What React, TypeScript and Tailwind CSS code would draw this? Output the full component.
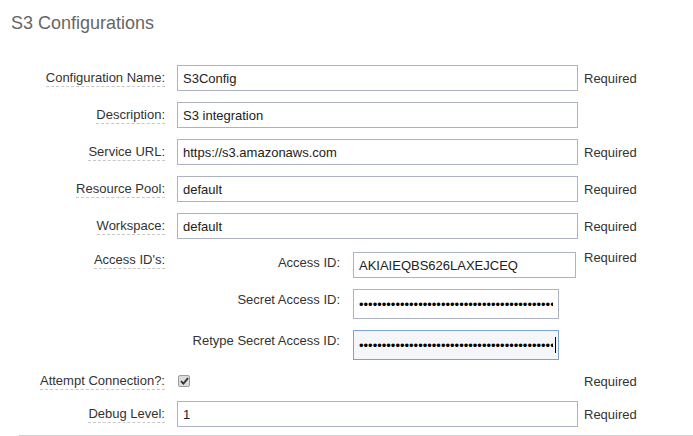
import React from 'react';

const inputCls =
  'h-[26px] border border-[#adb3c5] bg-white px-[5px] text-[13px] text-[#222] outline-none';

function Label({ children }: { children: React.ReactNode }) {
  return (
    <span className="border-b border-dashed border-[#c8c8c8] pb-px leading-[15px] text-[#333]">
      {children}
    </span>
  );
}

function Required() {
  return <span className="leading-[15px] text-[#333]">Required</span>;
}

function Row({
  label,
  value,
  required,
}: {
  label: string;
  value: string;
  required?: boolean;
}) {
  return (
    <div className="flex items-center h-[26px] mb-[11px]">
      <div className="w-[165px] text-right">
        <Label>{label}</Label>
      </div>
      <div className="w-[407px] ml-[12px]">
        <input className={`${inputCls} w-[401px]`} defaultValue={value} />
      </div>
      {required && <Required />}
    </div>
  );
}

const secret = 'x'.repeat(48);

export default function App() {
  return (
    <div
      className="w-[693px] h-[436px] bg-white overflow-hidden text-[13px]"
      style={{ fontFamily: '"Liberation Sans", Arial, sans-serif' }}
    >
      <h1 className="pt-[13px] pl-[11px] text-[18px] leading-[21px] text-[#666] font-normal">
        S3 Configurations
      </h1>

      <div className="mt-[31px]">
        <Row label="Configuration Name:" value="S3Config" required />
        <Row label="Description:" value="S3 integration" />
        <Row label="Service URL:" value="https://s3.amazonaws.com" required />
        <Row label="Resource Pool:" value="default" required />
        <Row label="Workspace:" value="default" required />

        {/* access ids block */}
        <div className="flex items-start">
          <div className="w-[165px] text-right">
            <Label>Access ID's:</Label>
          </div>
          <div className="w-[407px] ml-[12px] pt-[2px] flex flex-col gap-[11px]">
            <div className="flex items-start">
              <div className="w-[163px] text-right pt-[3px] leading-[15px] text-[#333]">Access ID:</div>
              <input
                className={`${inputCls} ml-[13px] w-[223px]`}
                defaultValue="AKIAIEQBS626LAXEJCEQ"
              />
            </div>
            <div className="flex items-start">
              <div className="w-[163px] text-right pt-[3px] leading-[15px] text-[#333]">Secret Access ID:</div>
              <input
                type="password"
                className={`${inputCls} ml-[13px] w-[206px] h-[30px] text-black`}
                defaultValue={secret}
              />
            </div>
            <div className="flex items-start">
              <div className="w-[163px] text-right pt-[3px] leading-[15px] text-[#333]">
                Retype Secret Access ID:
              </div>
              <div className="relative ml-[13px]">
                <input
                  type="password"
                  className="h-[30px] w-[206px] border border-[#78a1de] bg-[#f4f6f9] px-[5px] text-[13px] text-black outline-none"
                  defaultValue={secret}
                />
                <span className="absolute right-[3px] top-[7px] h-[16px] w-px bg-black" />
              </div>
            </div>
          </div>
          <Required />
        </div>

        <div className="flex items-center h-[20px] mt-[11px]">
          <div className="w-[165px] text-right">
            <Label>Attempt Connection?:</Label>
          </div>
          <div className="w-[407px] ml-[12px] flex items-center">
            <span className="ml-px flex h-[12px] w-[12px] items-center justify-center rounded-[2px] border border-[#9c9c9c] bg-[#dcdcdc]">
              <svg width="9" height="8" viewBox="0 0 9 8">
                <path d="M1 4.2 L3.4 6.6 L8 1.2" fill="none" stroke="#333" strokeWidth="1.8" />
              </svg>
            </span>
          </div>
          <Required />
        </div>

        <div className="flex items-center h-[26px] mt-[10px]">
          <div className="w-[165px] text-right">
            <Label>Debug Level:</Label>
          </div>
          <div className="w-[407px] ml-[12px]">
            <input className={`${inputCls} w-[401px]`} defaultValue="1" />
          </div>
          <Required />
        </div>

        <div className="mt-[8px] ml-[19px] border-t border-[#cfcfcf]" />
      </div>
    </div>
  );
}
